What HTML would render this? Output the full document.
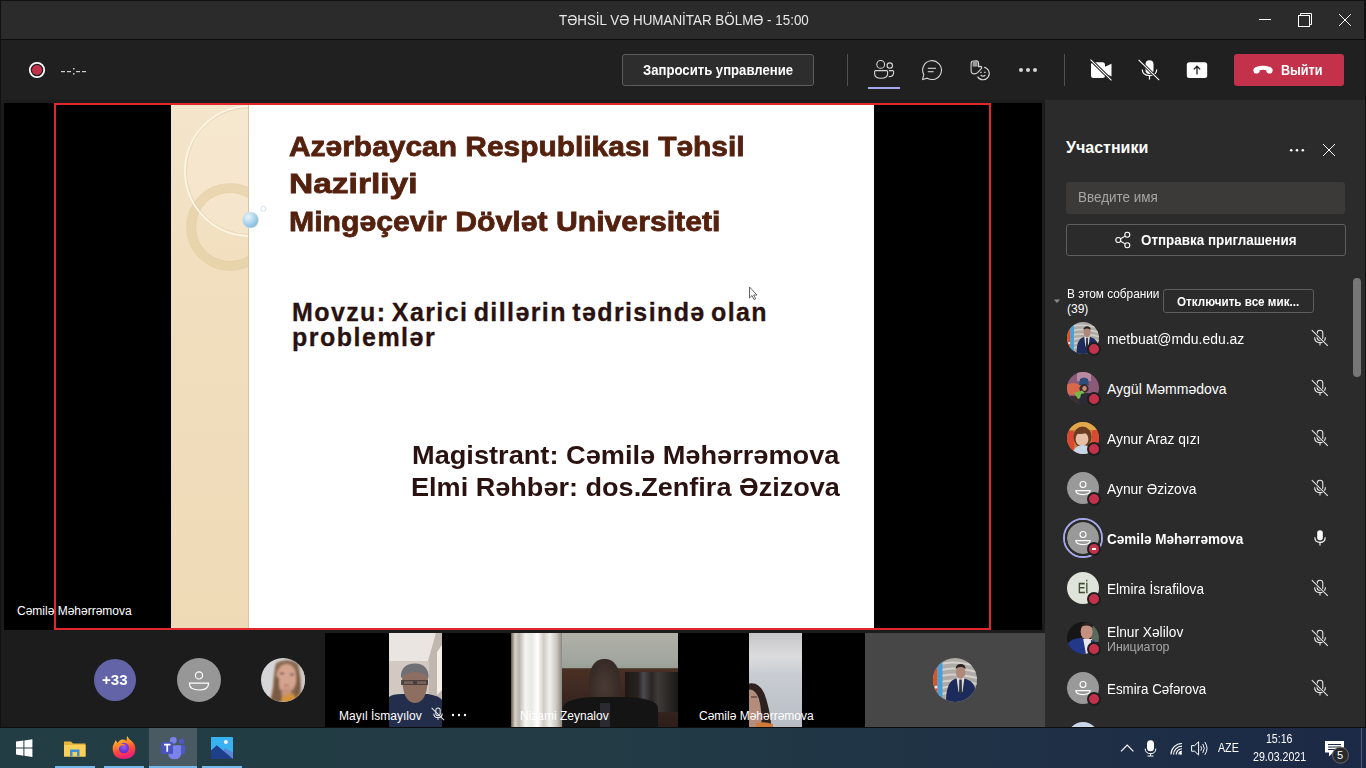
<!DOCTYPE html>
<html><head><meta charset="utf-8">
<style>
*{margin:0;padding:0;box-sizing:border-box}
html,body{width:1366px;height:768px;overflow:hidden;background:#1f1f1f;font-family:"Liberation Sans",sans-serif;color:#fff}
.a{position:absolute}
.t{position:absolute;white-space:nowrap;line-height:1;transform-origin:0 0}
#titlebar{left:0;top:0;width:1366px;height:40px;background:#2b2b2b;border-top:1px solid #111;border-bottom:1px solid #0c0c0c;border-right:2px solid #111}
#toolbar{left:0;top:40px;width:1366px;height:60px;background:#202020}
#stagewrap{left:0;top:100px;width:1045px;height:627px;background:#1c1c1c;border-left:1px solid #111}
#stage{left:4px;top:103px;width:1038px;height:527px;background:#000}
#panel{left:1045px;top:100px;width:321px;height:627px;background:#2b2b2b}
#taskbar{left:0;top:727px;width:1366px;height:41px;background:linear-gradient(90deg,#223d44 0%,#223b45 45%,#1e2f46 80%,#1c2946 100%);border-top:1px solid #0d0d0d}
.btn{position:absolute;border:1px solid #5a5a5a;border-radius:3px;background:#2c2c2c}
.av{position:absolute;border-radius:50%;overflow:hidden}
.st{position:absolute;width:14px;height:14px;border-radius:50%;background:#c4314b;border:2px solid #1f1f1f}
.nm{position:absolute;white-space:nowrap;line-height:1;font-size:14px;color:#fff;transform-origin:0 0}
</style></head><body>
<svg width="0" height="0" style="position:absolute"><defs>
<symbol id="manflag" viewBox="0 0 44 44"><clipPath id="mfc"><circle cx="22" cy="22" r="22"/></clipPath><filter id="mfb" x="-10%" y="-10%" width="120%" height="120%"><feGaussianBlur stdDeviation="0.7"/></filter>
<g clip-path="url(#mfc)"><rect width="44" height="44" fill="#aeaaa6"/><g filter="url(#mfb)">
<path d="M8 6 Q20 2 44 8 M8 12 Q22 8 44 14 M8 18 Q20 14 44 20 M8 24 Q20 20 44 26 M8 30 Q20 26 44 32 M8 36 Q20 32 44 38" stroke="#d4d0cc" stroke-width="2" fill="none"/>
<rect x="0" y="4" width="4.5" height="40" fill="#d8542a"/><rect x="4.5" y="4" width="5" height="40" fill="#4aa0d8"/><circle cx="3" cy="29" r="1.6" fill="#f0e0e0"/>
<path d="M13 44 Q13 24 22 21 L27 19 L33 21 Q43 24 43 36 V44 Z" fill="#1e2a5c"/>
<path d="M23.5 19.5 H31.5 L29.5 34 H25.5 Z" fill="#e0dcd6"/><path d="M26.3 21.5 H28.7 L29 36 H26 Z" fill="#2a3040"/>
<ellipse cx="27.6" cy="14" rx="4.8" ry="6.8" fill="#b08878"/><path d="M22.6 11 Q23 6 27.6 6 Q32.4 6 32.6 11 Q30 8.6 27.6 9 Q25 8.6 22.6 11 Z" fill="#2a2220"/>
</g></g></symbol>
</defs></svg>
<!-- TITLE BAR -->
<div id="titlebar" class="a"></div>
<div class="t" style="left:559px;top:12px;font-size:15px;color:#e8e8e8;transform:scaleX(0.893)">TƏHSİL VƏ HUMANİTAR BÖLMƏ - 15:00</div>
<svg class="a" style="left:0;top:0" width="1366" height="40">
  <line x1="1259" y1="19.5" x2="1271" y2="19.5" stroke="#fff" stroke-width="1"/>
  <rect x="1298.5" y="15.5" width="11" height="11" fill="none" stroke="#fff" stroke-width="1"/>
  <path d="M1300.5 15.5 V13.5 H1311.5 V24.5 H1309.5" fill="none" stroke="#fff" stroke-width="1"/>
  <path d="M1339 14 L1351 26 M1351 14 L1339 26" stroke="#fff" stroke-width="1"/>
</svg>

<!-- TOOLBAR -->
<div id="toolbar" class="a"></div>
<svg class="a" style="left:0;top:39px" width="1366" height="61" viewBox="0 39 1366 61">
  <circle cx="37" cy="70" r="7.2" fill="none" stroke="#fff" stroke-width="1.8"/>
  <circle cx="37" cy="70" r="5" fill="#c4314b"/>
  <g fill="#cfcfcf">
    <rect x="61" y="71" width="4" height="1.2"/><rect x="67" y="71" width="4" height="1.2"/>
    <rect x="73" y="68" width="1.5" height="1.5"/><rect x="73" y="73" width="1.5" height="1.5"/>
    <rect x="76" y="71" width="4" height="1.2"/><rect x="82" y="71" width="4" height="1.2"/>
  </g>
  <line x1="847.5" y1="54" x2="847.5" y2="86" stroke="#505050"/>
  <line x1="1064.5" y1="54" x2="1064.5" y2="86" stroke="#505050"/>
  <!-- people -->
  <g fill="none" stroke="#d6d6d6" stroke-width="1.1">
    <circle cx="880.7" cy="64.4" r="3.9"/>
    <circle cx="889.8" cy="65.6" r="2.7"/>
    <path d="M875 70.6 H886.6 Q887.6 70.6 887.6 71.6 V73.5 Q887.6 78.3 881 78.3 Q874.6 78.3 874.6 73.5 V71.6 Q874.6 70.6 875.6 70.6 Z"/>
    <path d="M889 70.6 H892.6 Q893.6 70.6 893.6 71.6 V72.8 Q893.6 76.8 888.6 76.8"/>
  </g>
  <rect x="868" y="87" width="32" height="2" fill="#a6a7e8"/>
  <!-- chat -->
  <g fill="none" stroke="#d6d6d6" stroke-width="1.1">
    <path d="M922.6 79.5 L923.8 74.6 A9.4 9.4 0 1 1 927.3 78.2 Z"/>
    <line x1="927.8" y1="68.3" x2="936" y2="68.3"/>
    <line x1="927.8" y1="71.7" x2="933.6" y2="71.7"/>
  </g>
  <!-- raise hand -->
  <rect x="972.6" y="61.6" width="5" height="5" fill="#9a9a9a"/>
  <g fill="none" stroke="#d6d6d6" stroke-width="1.1">
    <path d="M971.1 63.5 Q971.1 61 973.5 61 L976.3 60.7 Q978.6 60.9 978.6 63.5 V66.6 L980.4 66.4 Q982.6 66.9 981.3 68.6 L977.6 72.6 Q976.2 73.9 974.6 73.9 Q971.1 73.9 971.1 70.4 Z"/>
    <path d="M984.1 67.3 A6.3 6.3 0 1 1 977.5 76.65"/>
    <path d="M980.6 75.3 Q983 77.2 985.4 75.3"/>
  </g>
  <g stroke="#d6d6d6" stroke-width="1.2"><line x1="980.2" y1="72.4" x2="981.6" y2="72.4"/><line x1="984.2" y1="72.4" x2="985.6" y2="72.4"/></g>
  <!-- dots -->
  <g fill="#d6d6d6"><circle cx="1021" cy="70" r="2"/><circle cx="1028" cy="70" r="2"/><circle cx="1035" cy="70" r="2"/></g>
  <!-- video off -->
  <rect x="1091" y="62.3" width="14" height="15.7" rx="2.5" fill="#fff"/>
  <path d="M1104.5 67 L1111.5 63.8 V76.4 L1104.5 73.2 Z" fill="#fff"/>
  <path d="M1090.5 59.6 L1111.5 80.4" stroke="#202020" stroke-width="3"/>
  <path d="M1090.5 59.6 L1111.5 80.4" stroke="#fff" stroke-width="1.1"/>
  <!-- mic off -->
  <rect x="1145.5" y="60.2" width="8" height="13.8" rx="4" fill="#fff"/>
  <path d="M1142.3 69.5 Q1142.3 75.5 1149.5 75.5 Q1156.7 75.5 1156.7 69.5 M1149.5 75.5 V79.6" fill="none" stroke="#fff" stroke-width="1.2"/>
  <path d="M1138.6 59.8 L1159.2 80.2" stroke="#202020" stroke-width="3"/>
  <path d="M1138.6 59.8 L1159.2 80.2" stroke="#fff" stroke-width="1.1"/>
  <!-- share -->
  <rect x="1186.8" y="62.3" width="20.4" height="15.7" rx="2.5" fill="#fff"/>
  <path d="M1197 74.6 V66.3 M1193.8 69.4 L1197 66.2 L1200.2 69.4" fill="none" stroke="#202020" stroke-width="1.3"/>
</svg>
<div class="btn" style="left:622px;top:54px;width:192px;height:32px;background:#2d2d2d;border-color:#5d5d5d"></div>
<div class="t" style="left:643px;top:63px;font-size:14px;font-weight:700;color:#fff;transform:scaleX(0.938)">Запросить управление</div>
<div class="a" style="left:1234px;top:54px;width:110px;height:32px;background:#c4314b;border-radius:3px"></div>
<svg class="a" style="left:1250px;top:62px" width="26" height="16" viewBox="1250 62 26 16">
  <path d="M1253.5 71.3 Q1252.6 68 1256 66.9 Q1263 64.6 1270 66.9 Q1273.4 68 1272.5 71.3 Q1272.2 73.6 1270.5 73.6 L1268.5 73.4 Q1266.6 73.2 1266.4 71.6 L1266.3 70.2 Q1263 69.2 1259.7 70.2 L1259.6 71.6 Q1259.4 73.2 1257.5 73.4 L1255.5 73.6 Q1253.8 73.6 1253.5 71.3 Z" fill="#fff"/>
</svg>
<div class="t" style="left:1281px;top:63px;font-size:14px;font-weight:700;color:#fff;transform:scaleX(0.9)">Выйти</div>

<!-- STAGE -->
<div id="stagewrap" class="a"></div>
<div id="stage" class="a"></div>
<!-- slide -->
<div class="a" style="left:171px;top:105px;width:703px;height:523px;background:#fff;overflow:hidden">
  <div class="a" style="left:0;top:0;width:77px;height:523px;background:linear-gradient(180deg,#f4e5cb 0%,#f1dfbf 30%,#efdab6 100%)"></div>
  <div class="a" style="left:77px;top:0;width:1px;height:523px;background:#d8c8a4"></div>
  <svg class="a" style="left:0;top:0" width="100" height="200" viewBox="171 105 100 200">
    <defs><clipPath id="cl"><rect x="171" y="105" width="77" height="523"/></clipPath></defs>
    <defs><radialGradient id="bub" cx="0.35" cy="0.3" r="0.75"><stop offset="0" stop-color="#e8f4fb"/><stop offset="0.5" stop-color="#b5d8ee"/><stop offset="1" stop-color="#7fb4d8"/></radialGradient></defs>
    <g clip-path="url(#cl)" fill="none">
      <circle cx="250" cy="171" r="65" fill="#f7ead4" opacity=".55"/>
      <circle cx="230" cy="227" r="39" stroke="#e3cd9f" stroke-width="9" opacity=".6"/>
      <circle cx="230" cy="227" r="34.5" stroke="#d8c08e" stroke-width="0.8" opacity=".5"/>
      <circle cx="230" cy="227" r="43.5" stroke="#dcc49a" stroke-width="0.8" opacity=".4"/>
      <circle cx="250" cy="171" r="65" stroke="#fdf6e6" stroke-width="1.8"/>
      <circle cx="250" cy="171" r="63.6" stroke="#dcc7a0" stroke-width="0.8" opacity=".6"/>
    </g>
    <circle cx="250.5" cy="220" r="8" fill="url(#bub)" stroke="#cfe3f0" stroke-width=".8"/>
    <circle cx="263.4" cy="208.8" r="2.5" fill="none" stroke="#c8d8e4" stroke-width=".8"/>
  </svg>
</div>
<div class="t" style="left:289px;top:131.7px;font-size:28.5px;font-weight:700;color:#55210f;-webkit-text-stroke:0.8px #55210f;transform:scaleX(1.0498)">Azərbaycan Respublikası Təhsil</div>
<div class="t" style="left:289px;top:168.8px;font-size:28.5px;font-weight:700;color:#55210f;-webkit-text-stroke:0.8px #55210f;transform:scaleX(1.1758)">Nazirliyi</div>
<div class="t" style="left:289px;top:206.6px;font-size:28.5px;font-weight:700;color:#55210f;-webkit-text-stroke:0.8px #55210f;transform:scaleX(1.0599)">Mingəçevir Dövlət Universiteti</div>
<div class="t" style="left:292px;top:299.5px;font-size:25px;font-weight:700;color:#2a1210;-webkit-text-stroke:0.3px #2a1210;letter-spacing:1.4px;word-spacing:-3px">Movzu: Xarici dillərin tədrisində olan</div>
<div class="t" style="left:292px;top:325.2px;font-size:25px;font-weight:700;color:#2a1210;-webkit-text-stroke:0.3px #2a1210;letter-spacing:1.5px">problemlər</div>
<div class="t" style="left:412px;top:442.5px;font-size:25px;font-weight:700;color:#2a1210;transform:scaleX(1.087)">Magistrant: Cəmilə Məhərrəmova</div>
<div class="t" style="left:411px;top:474.7px;font-size:25px;font-weight:700;color:#2a1210;transform:scaleX(1.083)">Elmi Rəhbər: dos.Zenfira Əzizova</div>
<!-- cursor -->
<svg class="a" style="left:748px;top:286px" width="12" height="16" viewBox="0 0 12 16"><path d="M1.5 1 V12 L4 9.6 L6 13.5 L7.6 12.8 L5.7 9 H9 Z" fill="#fff" stroke="#555" stroke-width=".9"/></svg>
<!-- red frame -->
<div class="a" style="left:54px;top:103px;width:937px;height:527px;border:2px solid #e3262b"></div>
<div class="t" style="left:17px;top:605px;font-size:12px;color:#fff">Cəmilə Məhərrəmova</div>
<!-- THUMBS -->
<div class="av" style="left:94px;top:659px;width:42px;height:42px;background:#6264a7"></div>
<div class="t" style="left:102px;top:673px;font-size:14px;font-weight:700;color:#fff;transform:scaleX(1.08)">+33</div>
<div class="av" style="left:177px;top:658px;width:44px;height:44px;background:#979797"><svg width="44" height="44" viewBox="-22 -22 44 44"><circle cx="0" cy="-4.6" r="3.6" fill="none" stroke="#fff" stroke-width="1.2"/><path d="M-9.6 3.2 H9.6 Q9.6 10 0 10 Q-9.6 10 -9.6 3.2 Z" fill="none" stroke="#fff" stroke-width="1.2"/></svg></div>
<svg class="a" style="left:261px;top:658px" width="44" height="44" viewBox="0 0 44 44"><defs><clipPath id="wc"><circle cx="22" cy="22" r="22"/></clipPath><filter id="bl" x="-20%" y="-20%" width="140%" height="140%"><feGaussianBlur stdDeviation="1.3"/></filter></defs><g clip-path="url(#wc)"><rect width="44" height="44" fill="#d6d6d8"/><g filter="url(#bl)"><rect x="34" y="0" width="10" height="44" fill="#cfcac4"/><path d="M15 5 Q26 -1 37 5 Q41 20 40 38 L44 44 H9 Q11 36 12 28 Q13 12 15 5 Z" fill="#8a6a52"/><ellipse cx="25.5" cy="20" rx="10" ry="14" fill="#d5a48e"/><rect x="21" y="30" width="9" height="8" fill="#c89480"/><ellipse cx="21" cy="15.5" rx="2.4" ry="1.1" fill="#6e5048"/><ellipse cx="31" cy="16.5" rx="2.4" ry="1.1" fill="#6e5048"/><ellipse cx="25.5" cy="27.5" rx="3.2" ry="1.1" fill="#b8786a"/><path d="M17 44 Q22 37 28 36 Q36 35 42 37 L44 44 Z" fill="#d49238"/><path d="M10 44 Q13 30 15 18 L18 20 Q18 34 21 44 Z" fill="#7a5a42"/><path d="M36 12 L39.5 26 Q38.5 36 35 41 L33 37 Q36 28 35 14 Z" fill="#7a5a42"/></g></g></svg>
<div class="a" style="left:325px;top:633px;width:540px;height:94px;background:#000"></div>
<svg class="a" style="left:389px;top:633px" width="53" height="94" viewBox="389 633 53 94"><defs><filter id="mb" x="-5%" y="-5%" width="110%" height="110%"><feGaussianBlur stdDeviation="0.6"/></filter></defs>
<rect x="389" y="633" width="53" height="94" fill="#d6cec6"/>
<g filter="url(#mb)">
<path d="M389 633 H436 L429 661 H389 Z" fill="#ebe5e1"/>
<path d="M436 633 H442 V727 H428 V661 Z" fill="#bfb7b0"/>
<path d="M437 652 L442 645 V690 L437 695 Z" fill="#f4eee4"/>
<path d="M389 661 H429 V700 H389 Z" fill="#d2cac2"/>
<path d="M389 697 Q392 694 402 694 L428 694 Q440 696 442 700 V727 H389 Z" fill="#232e4c"/>
<path d="M402 674 Q402 703 415 703 Q428 703 428 674 Q428 668 415 668 Q402 668 402 674 Z" fill="#8e6e60"/>
<path d="M401 678 Q400 664 415 663.5 Q429 664 428.5 678 Q424 672 415 672 Q406 672 401 678 Z" fill="#6e7076"/>
<path d="M401 680 H428 V685 H401 Z" fill="#3a3436" opacity=".8"/>
<path d="M404 681.2 H413 V684 H404 Z M417 681.2 H426 V684 H417 Z" fill="#7a625a"/>
</g></svg>
<div class="a" style="left:511px;top:633px;width:167px;height:94px;background:linear-gradient(180deg,#b0b0a8 0%,#a4a8a0 25%,#9aa098 37%,#4a3024 38%,#3a2620 70%,#2c1e1a 100%)"></div>
<div class="a" style="left:511px;top:633px;width:51px;height:94px;background:linear-gradient(90deg,#6a5a4a 0%,#d8d4cc 8%,#b8b4ac 16%,#f4f4f2 28%,#e8e8e4 40%,#ffffff 52%,#d0ccc4 64%,#f0f0ee 76%,#c8c4bc 90%,#8a8680 100%)"></div>
<div class="a" style="left:625px;top:672px;width:53px;height:40px;background:linear-gradient(90deg,#1e1814 0%,#2a2420 25%,#4a4a52 35%,#2a2622 50%,#3e3a38 62%,#1c1816 100%)"></div>
<div class="a" style="left:589px;top:659px;width:31px;height:46px;border-radius:45% 45% 40% 40%;background:radial-gradient(ellipse at 50% 60%,#4a3a34 0%,#2e2420 100%)"></div>
<div class="a" style="left:563px;top:697px;width:95px;height:30px;border-radius:35% 35% 0 0;background:#141414"></div>
<div class="a" style="left:600px;top:703px;width:10px;height:24px;background:#2a2a30"></div>
<div class="a" style="left:749px;top:633px;width:53px;height:94px;background:linear-gradient(180deg,#c6c6c8 0%,#dcdcde 25%,#c8ccd2 45%,#b8bcc4 100%)"></div>
<svg class="a" style="left:749px;top:680px" width="30" height="47" viewBox="749 680 30 47"><path d="M749 683.5 Q759 681.5 764.5 694 Q769.5 707 771.5 727 H749 Z" fill="#2e2220"/><path d="M749 689.5 Q755.5 689 759 699 Q762 710 761.5 727 H749 Z" fill="#b48c7c"/><path d="M751 697 H757" stroke="#5a4038" stroke-width="1.2"/><path d="M756 723 Q764 721 773 724 V727 H756 Z" fill="#d07a3a"/></svg>
<div class="a" style="left:865px;top:633px;width:180px;height:94px;background:#474747"></div>
<svg class="a" style="left:933px;top:658px" width="44" height="44"><use href="#manflag"/></svg>
<div class="t" style="left:339px;top:710px;font-size:12px;color:#fff">Mayıl İsmayılov</div>
<svg class="a" style="left:431px;top:707px" width="14" height="14" viewBox="0 0 18 18"><g fill="none" stroke="#e6e6e6" stroke-width="1.3"><rect x="6.2" y="1.2" width="5.6" height="10" rx="2.8"/><path d="M3.6 8.2 Q3.6 13.6 9 13.6 Q14.4 13.6 14.4 8.2 M9 13.6 V16.6"/></g><path d="M0.8 1.2 L16.8 16.8" stroke="#e6e6e6" stroke-width="1.3"/></svg>
<svg class="a" style="left:450px;top:712px" width="18" height="6"><g fill="#fff"><circle cx="3" cy="3" r="1.2"/><circle cx="9" cy="3" r="1.2"/><circle cx="15" cy="3" r="1.2"/></g></svg>
<div class="t" style="left:520px;top:710px;font-size:12px;color:#fff">Nizami Zeynalov</div>
<div class="t" style="left:699px;top:710px;font-size:12px;color:#fff">Cəmilə Məhərrəmova</div>
<!-- TASKBAR -->
<div id="taskbar" class="a"></div>
<div class="a" style="left:149px;top:728px;width:48px;height:40px;background:#4a5a62"></div>
<div class="a" style="left:55px;top:766px;width:40px;height:2px;background:#76b9ed"></div>
<div class="a" style="left:104px;top:766px;width:40px;height:2px;background:#76b9ed"></div>
<div class="a" style="left:149px;top:766px;width:48px;height:2px;background:#76b9ed"></div>
<div class="a" style="left:202px;top:766px;width:40px;height:2px;background:#76b9ed"></div>
<svg class="a" style="left:0;top:728px" width="1366" height="40" viewBox="0 728 1366 40">
  <g fill="#fff"><path d="M16 741.6 L23.4 740.5 V747.6 H16 Z M24.4 740.4 L32.4 739.3 V747.6 H24.4 Z M16 748.6 H23.4 V755.7 L16 754.6 Z M24.4 748.6 H32.4 V756.9 L24.4 755.8 Z"/></g>
  <path d="M64 741.5 H71 L73 743.5 H85.5 V756.5 H64 Z" fill="#e8b43a"/>
  <path d="M64 745 H85.5 V756.5 H64 Z" fill="#f7d15c"/>
  <path d="M70 749.5 H79.5 V756.5 H77 V752 H72.5 V756.5 H70 Z" fill="#3d8fd8"/>
  <defs>
    <linearGradient id="ffg" x1="0" y1="0" x2="0.3" y2="1"><stop offset="0" stop-color="#fff44f"/><stop offset="0.35" stop-color="#ff9a2a"/><stop offset="0.7" stop-color="#ff4a3a"/><stop offset="1" stop-color="#e8217a"/></linearGradient>
    <radialGradient id="ffp" cx="0.5" cy="0.4" r="0.6"><stop offset="0" stop-color="#9a5af0"/><stop offset="1" stop-color="#5a2acb"/></radialGradient>
  </defs>
  <path d="M127.2 736 Q129 739.5 131.5 741 Q135.6 744 135.4 749.5 Q135 758.6 124.4 759 Q113.4 759 112.6 749.5 Q112.4 745.4 114.6 742.4 Q115 740.8 115.9 740.2 Q116.6 742 117.6 743 Q119 740.2 121.8 739.6 Q124.6 739.4 126.6 741 Q126.4 738.4 127.2 736 Z" fill="url(#ffg)"/>
  <circle cx="123.8" cy="748" r="5.2" fill="url(#ffp)"/>
  <path d="M116.2 745 Q118 743 121.4 743.4 Q124.6 743.8 126.4 745.6 Q123 744.6 120.8 745.8 Q118.6 747 118.4 749.6 Q117 747.4 116.2 745 Z" fill="#ff8a2a"/>
  <circle cx="173.3" cy="740.3" r="3.4" fill="#7b83eb"/>
  <circle cx="181.5" cy="741.3" r="2.6" fill="#5059c9"/>
  <path d="M177.9 745.2 H185 V750.8 Q185 755.1 181.2 755.1 Q177.9 755.1 177.9 750.8 Z" fill="#5059c9"/>
  <path d="M168.2 745.2 H181 V753.2 Q181 759.2 174.6 759.2 Q168.2 759.2 168.2 753.2 Z" fill="#7b83eb"/>
  <rect x="161.2" y="742.1" width="11.8" height="12" rx="0.8" fill="#4b53bc"/>
  <path d="M164 743.8 H170.5 V745.4 H168.1 V751.7 H166.4 V745.4 H164 Z" fill="#fff"/>
  <rect x="211" y="737" width="22" height="22" rx="0.8" fill="#38b2f0"/>
  <path d="M224.5 748 L233 752.5 V759 H222 Z" fill="#5a86d8"/>
  <path d="M211 750.6 L216.8 745.2 L233 759 H211 Z" fill="#1e3f8a"/>
  <circle cx="225.9" cy="742.1" r="2" fill="#f2f2f2"/>
  <path d="M1121 751.4 L1127.2 745 L1133.4 751.4" fill="none" stroke="#fff" stroke-width="1.2"/>
  <rect x="1147" y="740.2" width="7" height="11" rx="3.5" fill="#fff"/>
  <path d="M1145.2 748.6 Q1145.2 753.6 1150.5 753.6 Q1155.8 753.6 1155.8 748.6 M1150.5 753.6 V756 M1147.5 756 H1153.5" fill="none" stroke="#fff" stroke-width="1"/>
  <g fill="none" stroke="#fff" stroke-width="1.1"><path d="M1171 754.5 A11 11 0 0 1 1182 743.5"/><path d="M1173.6 754.5 A8.4 8.4 0 0 1 1182 746.1"/><path d="M1176.2 754.5 A5.8 5.8 0 0 1 1182 748.7"/><path d="M1178.8 754.5 A3.2 3.2 0 0 1 1182 751.3"/></g>
  <circle cx="1180.7" cy="753.4" r="1.3" fill="#fff"/>
  <path d="M1191.6 745.6 H1194.6 L1198.6 741.8 V755 L1194.6 751.2 H1191.6 Z" fill="none" stroke="#fff" stroke-width="1"/>
  <g fill="none" stroke="#fff" stroke-width="1"><path d="M1200.8 746.2 Q1202.4 748.4 1200.8 750.6"/><path d="M1202.8 744 Q1205.8 748.4 1202.8 752.8"/><path d="M1204.8 742 Q1209.2 748.4 1204.8 754.8"/></g>
  <path d="M1325 741 H1344 V752.6 H1333 L1329 756.6 V752.6 H1325 Z" fill="#fff"/>
  <g stroke="#1c2a45" stroke-width="1"><line x1="1328" y1="744.5" x2="1341" y2="744.5"/><line x1="1328" y1="747" x2="1341" y2="747"/><line x1="1328" y1="749.5" x2="1336" y2="749.5"/></g>
  <circle cx="1340.5" cy="755.2" r="8" fill="#2a2a2a" stroke="#6a6a6a" stroke-width="1"/>
  <line x1="1361.5" y1="728" x2="1361.5" y2="768" stroke="#50607a" stroke-width="1"/>
</svg>
<div class="t" style="left:1218px;top:742px;font-size:12px;color:#fff;transform:scaleX(0.89)">AZE</div>
<div class="t" style="left:1266px;top:733px;font-size:12px;color:#fff;transform:scaleX(0.88)">15:16</div>
<div class="t" style="left:1253px;top:751px;font-size:12px;color:#fff;transform:scaleX(0.885)">29.03.2021</div>
<div class="t" style="left:1337px;top:750px;font-size:11px;color:#fff">5</div>
<!-- PANEL -->
<div id="panel" class="a"></div>
<div class="t" style="left:1066px;top:140px;font-size:16px;font-weight:700;color:#fff;transform:scaleX(1.0)">Участники</div>
<svg class="a" style="left:1286px;top:142px" width="54" height="18" viewBox="1286 142 54 18"><g fill="#fff"><circle cx="1291.2" cy="150.3" r="1.3"/><circle cx="1297" cy="150.3" r="1.3"/><circle cx="1302.8" cy="150.3" r="1.3"/></g><path d="M1323 144 L1335 156 M1335 144 L1323 156" stroke="#fff" stroke-width="1"/></svg>
<div class="a" style="left:1066px;top:182px;width:279px;height:32px;background:#3b3a39;border-radius:3px"></div>
<div class="t" style="left:1078px;top:190px;font-size:14px;color:#a6a6a6;transform:scaleX(0.96)">Введите имя</div>
<div class="btn" style="left:1066px;top:224px;width:280px;height:32px;background:#2b2b2b;border-color:#5e5e5e"></div>
<svg class="a" style="left:1112px;top:230px" width="22" height="20" viewBox="1112 230 22 20"><g fill="none" stroke="#fff" stroke-width="1.1"><circle cx="1127.3" cy="234.8" r="2.5"/><circle cx="1127.3" cy="245.2" r="2.5"/><circle cx="1118.3" cy="240" r="2.5"/><path d="M1120.5 238.8 L1125.1 236.1 M1120.5 241.2 L1125.1 243.9"/></g></svg>
<div class="t" style="left:1141px;top:233px;font-size:14px;font-weight:700;color:#fff;transform:scaleX(0.958)">Отправка приглашения</div>
<svg class="a" style="left:1052px;top:296px" width="10" height="8"><path d="M1.8 3.4 H8.2 L5 7 Z" fill="#8a8a8a"/></svg>
<div class="t" style="left:1067px;top:288px;font-size:12px;color:#fff;transform:scaleX(0.985)">В этом собрании</div>
<div class="t" style="left:1067px;top:303px;font-size:12px;color:#fff">(39)</div>
<div class="btn" style="left:1163px;top:289px;width:151px;height:24px;background:#2b2b2b;border-color:#5e5e5e"></div>
<div class="t" style="left:1177px;top:296px;font-size:12px;font-weight:700;color:#fff;transform:scaleX(0.972)">Отключить все мик...</div>
<div class="a" style="left:1353px;top:278px;width:8px;height:99px;background:#777;border-radius:4px"></div>
<svg class="a" style="left:1067px;top:322px" width="32" height="32" viewBox="0 0 44 44"><use href="#manflag"/></svg>
<div class="st" style="left:1087px;top:342px"></div>
<div class="nm" style="left:1107px;top:332px;transform:scaleX(0.995)">metbuat@mdu.edu.az</div>
<svg class="a" style="left:1311px;top:329px" width="18" height="18" viewBox="0 0 18 18"><g fill="none" stroke="#e6e6e6" stroke-width="1.1"><rect x="6.2" y="1.2" width="5.6" height="10" rx="2.8"/><path d="M3.6 8.2 Q3.6 13.6 9 13.6 Q14.4 13.6 14.4 8.2 M9 13.6 V16.6"/></g><path d="M0.8 1.2 L16.8 16.8" stroke="#2b2b2b" stroke-width="2.6"/><path d="M0.8 1.2 L16.8 16.8" stroke="#e6e6e6" stroke-width="1.1"/></svg>
<svg class="a" style="left:1067px;top:372px" width="32" height="32" viewBox="0 0 32 32"><clipPath id="ag1"><circle cx="16" cy="16" r="16"/></clipPath><g clip-path="url(#ag1)"><rect width="32" height="32" fill="#8a5a78"/><rect x="10" y="0" width="14" height="9" fill="#b88aa0"/><ellipse cx="6" cy="17" rx="9" ry="6" fill="#d8684a"/><rect x="0" y="24" width="32" height="8" fill="#3a2e30"/><path d="M13 7 Q17 4 21 7 L22 13 H12 Z" fill="#2c4c7c"/><ellipse cx="17" cy="16.5" rx="4.6" ry="4.4" fill="#3a2a2c"/><ellipse cx="17.5" cy="16.5" rx="2.2" ry="2.4" fill="#c89078"/><path d="M7 21 L15 18.5 L20 23 L11 27 Z" fill="#78b848"/><path d="M14 22 Q22 19 28 24 V32 H12 Z" fill="#2a2a38"/></g></svg>
<div class="st" style="left:1087px;top:392px"></div>
<div class="nm" style="left:1107px;top:382px;transform:scaleX(1.0)">Aygül Məmmədova</div>
<svg class="a" style="left:1311px;top:379px" width="18" height="18" viewBox="0 0 18 18"><g fill="none" stroke="#e6e6e6" stroke-width="1.1"><rect x="6.2" y="1.2" width="5.6" height="10" rx="2.8"/><path d="M3.6 8.2 Q3.6 13.6 9 13.6 Q14.4 13.6 14.4 8.2 M9 13.6 V16.6"/></g><path d="M0.8 1.2 L16.8 16.8" stroke="#2b2b2b" stroke-width="2.6"/><path d="M0.8 1.2 L16.8 16.8" stroke="#e6e6e6" stroke-width="1.1"/></svg>
<svg class="a" style="left:1067px;top:422px" width="32" height="32" viewBox="0 0 32 32"><clipPath id="an2"><circle cx="16" cy="16" r="16"/></clipPath><g clip-path="url(#an2)"><rect width="32" height="32" fill="#c8783a"/><rect x="0" y="0" width="32" height="8" fill="#e0a848"/><rect x="0" y="9" width="7" height="20" rx="2" fill="#d84a32"/><rect x="25" y="8" width="7" height="14" rx="2" fill="#d84a32"/><ellipse cx="15.5" cy="15" rx="9" ry="10.5" fill="#6a3c22"/><ellipse cx="15" cy="17" rx="6.4" ry="7" fill="#e6bea6"/><path d="M8 10 Q14 5 23 9 Q20 12 12 12 Z" fill="#6a3c22"/><path d="M5 32 Q7 24 15 23 Q24 23 26 32 Z" fill="#c8d6ea"/></g></svg>
<div class="st" style="left:1087px;top:442px"></div>
<div class="nm" style="left:1107px;top:432px;transform:scaleX(0.987)">Aynur Araz qızı</div>
<svg class="a" style="left:1311px;top:429px" width="18" height="18" viewBox="0 0 18 18"><g fill="none" stroke="#e6e6e6" stroke-width="1.1"><rect x="6.2" y="1.2" width="5.6" height="10" rx="2.8"/><path d="M3.6 8.2 Q3.6 13.6 9 13.6 Q14.4 13.6 14.4 8.2 M9 13.6 V16.6"/></g><path d="M0.8 1.2 L16.8 16.8" stroke="#2b2b2b" stroke-width="2.6"/><path d="M0.8 1.2 L16.8 16.8" stroke="#e6e6e6" stroke-width="1.1"/></svg>
<div class="av" style="left:1067.0px;top:472.0px;width:32px;height:32px;background:#999999"><svg width="32" height="32" viewBox="-16 -16 32 32"><circle cx="0" cy="-3.5" r="3" fill="none" stroke="#fff" stroke-width="1.1"/><path d="M-7.2 2.6 H7.2 Q7.2 6.6 0 6.6 Q-7.2 6.6 -7.2 2.6 Z" fill="none" stroke="#fff" stroke-width="1.1"/></svg></div>
<div class="st" style="left:1087px;top:492px"></div>
<div class="nm" style="left:1107px;top:482px;transform:scaleX(0.989)">Aynur Əzizova</div>
<svg class="a" style="left:1311px;top:479px" width="18" height="18" viewBox="0 0 18 18"><g fill="none" stroke="#e6e6e6" stroke-width="1.1"><rect x="6.2" y="1.2" width="5.6" height="10" rx="2.8"/><path d="M3.6 8.2 Q3.6 13.6 9 13.6 Q14.4 13.6 14.4 8.2 M9 13.6 V16.6"/></g><path d="M0.8 1.2 L16.8 16.8" stroke="#2b2b2b" stroke-width="2.6"/><path d="M0.8 1.2 L16.8 16.8" stroke="#e6e6e6" stroke-width="1.1"/></svg>
<div class="av" style="left:1067.0px;top:522.0px;width:32px;height:32px;background:#999999"><svg width="32" height="32" viewBox="-16 -16 32 32"><circle cx="0" cy="-3.5" r="3" fill="none" stroke="#fff" stroke-width="1.1"/><path d="M-7.2 2.6 H7.2 Q7.2 6.6 0 6.6 Q-7.2 6.6 -7.2 2.6 Z" fill="none" stroke="#fff" stroke-width="1.1"/></svg></div>
<div class="a" style="left:1063px;top:518px;width:40px;height:40px;border-radius:50%;border:2px solid #a6a7e8"></div><div class="a" style="left:1065px;top:520px;width:36px;height:36px;border-radius:50%;border:2px solid #2b2b2b"></div>
<div class="st" style="left:1087px;top:542px"><div class="a" style="left:3px;top:4.4px;width:4px;height:1.3px;background:#fff"></div></div>
<div class="nm" style="left:1107px;top:532px;font-weight:700;transform:scaleX(0.968)">Cəmilə Məhərrəmova</div>
<svg class="a" style="left:1311px;top:529px" width="18" height="18" viewBox="0 0 18 18"><rect x="6.2" y="1.2" width="5.6" height="10" rx="2.8" fill="#fff"/><path d="M3.8 8.2 Q3.8 13.4 9 13.4 Q14.2 13.4 14.2 8.2 M9 13.4 V16.6" fill="none" stroke="#fff" stroke-width="1.1"/></svg>
<div class="av" style="left:1067px;top:572px;width:32px;height:32px;background:#dfe3d9"></div><div class="t" style="left:1077.5px;top:581px;font-size:14px;color:#3b4a2a;-webkit-text-stroke:0.3px #3b4a2a;transform:scaleX(0.78)">Eİ</div>
<div class="st" style="left:1087px;top:592px"></div>
<div class="nm" style="left:1107px;top:582px;transform:scaleX(0.974)">Elmira İsrafilova</div>
<svg class="a" style="left:1311px;top:579px" width="18" height="18" viewBox="0 0 18 18"><g fill="none" stroke="#e6e6e6" stroke-width="1.1"><rect x="6.2" y="1.2" width="5.6" height="10" rx="2.8"/><path d="M3.6 8.2 Q3.6 13.6 9 13.6 Q14.4 13.6 14.4 8.2 M9 13.6 V16.6"/></g><path d="M0.8 1.2 L16.8 16.8" stroke="#2b2b2b" stroke-width="2.6"/><path d="M0.8 1.2 L16.8 16.8" stroke="#e6e6e6" stroke-width="1.1"/></svg>
<svg class="a" style="left:1067px;top:622px" width="32" height="32" viewBox="0 0 32 32"><clipPath id="en6"><circle cx="16" cy="16" r="16"/></clipPath><g clip-path="url(#en6)"><rect width="32" height="32" fill="#161616"/><rect x="24" y="4" width="8" height="16" fill="#5a6a5c"/><ellipse cx="19.6" cy="9.5" rx="6" ry="8.2" fill="#c49080"/><path d="M13.5 6 Q14 1 19.6 1 Q25.4 1 25.8 6 Q22 3.4 19.6 3.6 Q16 3.4 13.5 6 Z" fill="#2a2220"/><path d="M14 17 H25 L24 32 H16 Z" fill="#e8e8ec"/><path d="M0 22 Q6 15 16 16 L19 32 H0 Z" fill="#24388a"/><path d="M24 18 Q30 19 32 24 V32 H23 Z" fill="#2a3a7a"/></g></svg>
<div class="st" style="left:1087px;top:642px"></div>
<div class="nm" style="left:1107px;top:625px;transform:scaleX(0.98)">Elnur Xəlilov</div>
<div class="t" style="left:1107px;top:641px;font-size:12px;color:#a8a8a8;transform:scaleX(1.03)">Инициатор</div>
<svg class="a" style="left:1311px;top:629px" width="18" height="18" viewBox="0 0 18 18"><g fill="none" stroke="#e6e6e6" stroke-width="1.1"><rect x="6.2" y="1.2" width="5.6" height="10" rx="2.8"/><path d="M3.6 8.2 Q3.6 13.6 9 13.6 Q14.4 13.6 14.4 8.2 M9 13.6 V16.6"/></g><path d="M0.8 1.2 L16.8 16.8" stroke="#2b2b2b" stroke-width="2.6"/><path d="M0.8 1.2 L16.8 16.8" stroke="#e6e6e6" stroke-width="1.1"/></svg>
<div class="av" style="left:1067.0px;top:672.0px;width:32px;height:32px;background:#999999"><svg width="32" height="32" viewBox="-16 -16 32 32"><circle cx="0" cy="-3.5" r="3" fill="none" stroke="#fff" stroke-width="1.1"/><path d="M-7.2 2.6 H7.2 Q7.2 6.6 0 6.6 Q-7.2 6.6 -7.2 2.6 Z" fill="none" stroke="#fff" stroke-width="1.1"/></svg></div>
<div class="st" style="left:1087px;top:692px"></div>
<div class="nm" style="left:1107px;top:682px;transform:scaleX(0.952)">Esmira Cəfərova</div>
<svg class="a" style="left:1311px;top:679px" width="18" height="18" viewBox="0 0 18 18"><g fill="none" stroke="#e6e6e6" stroke-width="1.1"><rect x="6.2" y="1.2" width="5.6" height="10" rx="2.8"/><path d="M3.6 8.2 Q3.6 13.6 9 13.6 Q14.4 13.6 14.4 8.2 M9 13.6 V16.6"/></g><path d="M0.8 1.2 L16.8 16.8" stroke="#2b2b2b" stroke-width="2.6"/><path d="M0.8 1.2 L16.8 16.8" stroke="#e6e6e6" stroke-width="1.1"/></svg>
<div class="a" style="left:1067px;top:722px;width:32px;height:5px;overflow:hidden"><div style="width:32px;height:32px;border-radius:50%;background:#c9d7e8"></div></div>
<div class="a" style="left:0;top:0;width:1px;height:727px;background:#111"></div>
<div class="a" style="left:1365px;top:0;width:1px;height:727px;background:#111"></div>
</body></html>
